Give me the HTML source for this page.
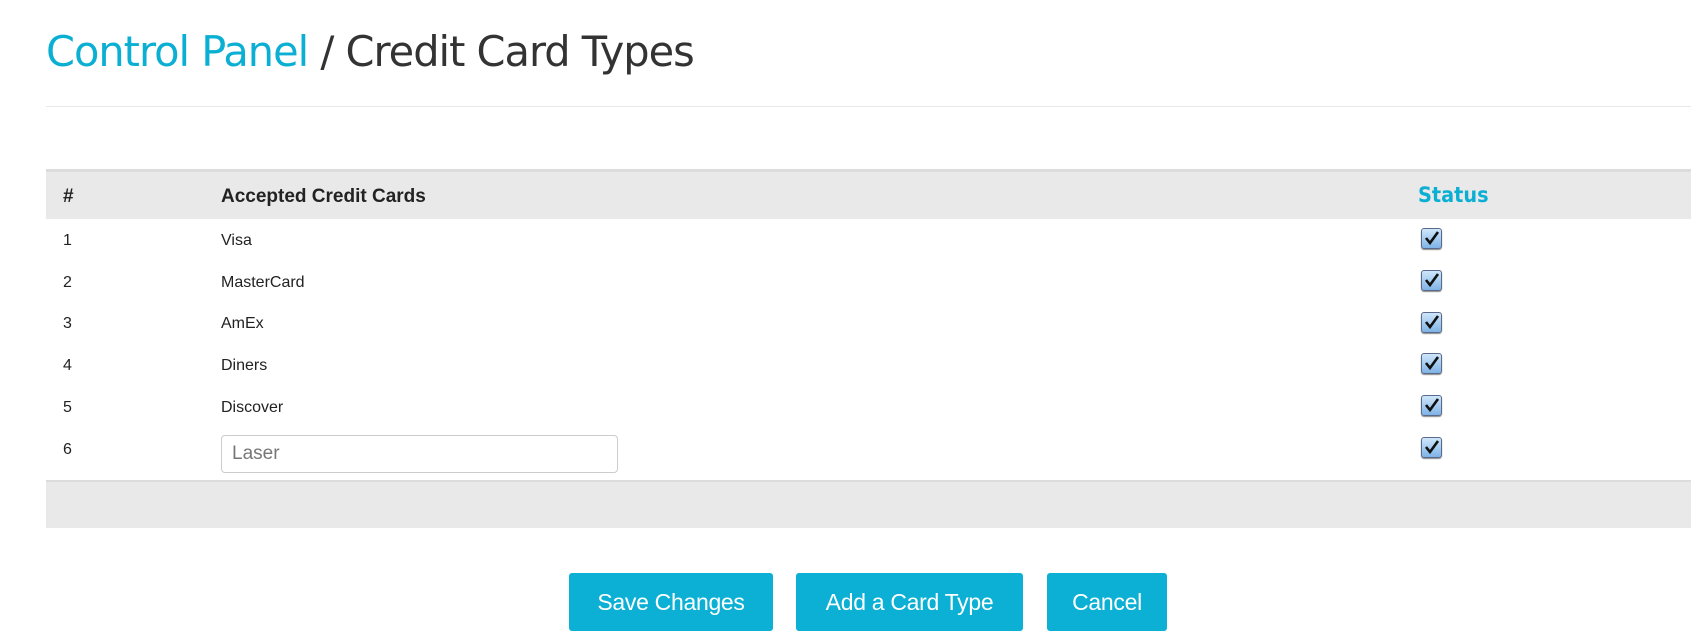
<!DOCTYPE html>
<html><head><style>
body{margin:0;width:1691px;height:639px;background:#fff;font-family:"Liberation Sans",Arial,sans-serif;position:relative;overflow:hidden;color:#222}
.a{position:absolute}
h1{position:absolute;left:46px;top:27px;margin:0;font-weight:normal;font-size:41.5px;color:#333;font-family:"DejaVu Sans","Liberation Sans",sans-serif;letter-spacing:-1px}
h1 span{color:#0bafd4}
.hr{left:46px;right:0;top:106px;height:1px;background:#e8e8e8}
.thb{left:46px;right:0;top:169px;height:3px;background:#dcdcdc}
.th{left:46px;right:0;top:172px;height:47px;background:#e9e9e9}
.hd{font-weight:bold;font-size:19px;top:186px}
.st{left:1418px;top:183px;color:#0bafd4;font-weight:bold;font-size:21px;font-family:"DejaVu Sans",sans-serif;transform:scaleX(.92);transform-origin:left}
.n{left:63px;font-size:16px}
.c{left:221px;font-size:16px}
.cb{left:1421px;width:19px;height:19px;border-radius:3px;background:linear-gradient(#cfe6fb,#7fb3e6);border:1px solid #5a6a8a;box-shadow:0 1px 1px #888}
.cb svg{position:absolute;left:2px;top:1px}
.inp{left:221px;top:435px;border:1px solid #ccc;border-radius:4px;font-size:19px;color:#777;line-height:36px;text-indent:10px;box-sizing:border-box;width:397px;height:38px}
.fb{left:46px;right:0;top:480px;height:2px;background:#dcdcdc}
.ft{left:46px;right:0;top:482px;height:46px;background:#e9e9e9}
.btn{top:573px;height:58px;background:#0bb0d4;color:#fff;font-size:23px;line-height:58px;text-align:center;border-radius:3px;letter-spacing:-0.3px}
</style></head><body>
<h1><span>Control Panel</span> / Credit Card Types</h1>
<div class="a hr"></div>
<div class="a thb"></div><div class="a th"></div>
<div class="a hd" style="left:63px">#</div>
<div class="a hd" style="left:221px">Accepted Credit Cards</div>
<div class="a st">Status</div>

<div class="a n" style="top:232px">1</div><div class="a c" style="top:232px">Visa</div>
<div class="a n" style="top:274px">2</div><div class="a c" style="top:274px">MasterCard</div>
<div class="a n" style="top:315px">3</div><div class="a c" style="top:315px">AmEx</div>
<div class="a n" style="top:357px">4</div><div class="a c" style="top:357px">Diners</div>
<div class="a n" style="top:399px">5</div><div class="a c" style="top:399px">Discover</div>
<div class="a n" style="top:441px">6</div>
<div class="a inp">Laser</div>

<div class="a cb" style="top:228px"><svg width="16" height="16"><path d="M2 8 L6 13 L14 2" stroke="#111" stroke-width="2.6" fill="none"/></svg></div>
<div class="a cb" style="top:270px"><svg width="16" height="16"><path d="M2 8 L6 13 L14 2" stroke="#111" stroke-width="2.6" fill="none"/></svg></div>
<div class="a cb" style="top:312px"><svg width="16" height="16"><path d="M2 8 L6 13 L14 2" stroke="#111" stroke-width="2.6" fill="none"/></svg></div>
<div class="a cb" style="top:353px"><svg width="16" height="16"><path d="M2 8 L6 13 L14 2" stroke="#111" stroke-width="2.6" fill="none"/></svg></div>
<div class="a cb" style="top:395px"><svg width="16" height="16"><path d="M2 8 L6 13 L14 2" stroke="#111" stroke-width="2.6" fill="none"/></svg></div>
<div class="a cb" style="top:437px"><svg width="16" height="16"><path d="M2 8 L6 13 L14 2" stroke="#111" stroke-width="2.6" fill="none"/></svg></div>

<div class="a fb"></div><div class="a ft"></div>
<div class="a btn" style="left:569px;width:204px">Save Changes</div>
<div class="a btn" style="left:796px;width:227px">Add a Card Type</div>
<div class="a btn" style="left:1047px;width:120px">Cancel</div>
</body></html>
